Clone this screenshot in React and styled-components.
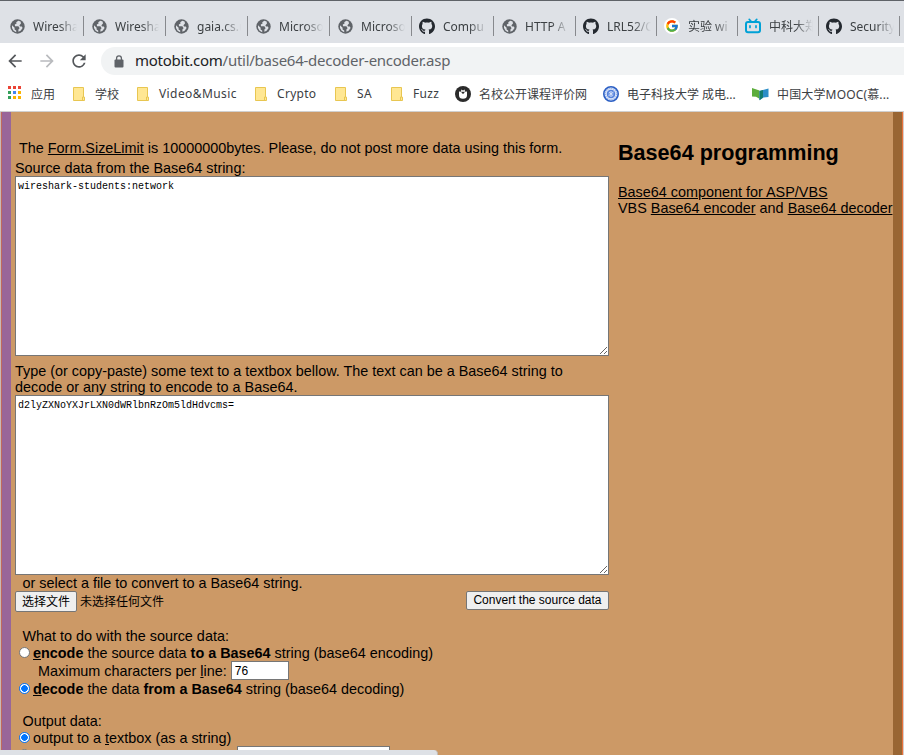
import React from "react";
import styled, { createGlobalStyle } from "styled-components";
import { MdArrowBack, MdArrowForward, MdRefresh } from "react-icons/md";
import { FaGithub } from "react-icons/fa";
import { FcGoogle } from "react-icons/fc";

const Global = createGlobalStyle`
  * { box-sizing: border-box; }
  html, body, #root { height: 100%; }
  body { margin: 0; overflow: hidden; background: #cc9966; }
`;

const Browser = styled.div`
  position: relative;
  display: flex;
  flex-direction: column;
  width: 904px;
  height: 755px;
  overflow: hidden;
  font-family: "Noto Sans", "Noto Sans CJK SC", sans-serif;
  font-size: 12px;
  color: #3c4043;
`;

const TabStrip = styled.div`
  display: flex;
  flex: none;
  height: 43px;
  padding: 15px 0 0 2px;
  border-top: 1px solid #5f6368;
  background: #dee1e6;
`;

const Tab = styled.div`
  display: flex;
  align-items: center;
  flex: none;
  width: ${(p) => p.$w}px;
  height: 20px;
  padding-left: 7px;
  gap: 8px;
  border-right: 1px solid #87898d;
`;

const Favicon = styled.span`
  display: flex;
  flex: none;
  align-items: center;
  justify-content: center;
  width: 16px;
  height: 16px;
  border-radius: 8px;
  background: ${(p) => p.$bg || "transparent"};
  color: ${(p) => p.$color || "#5f6368"};
`;

const TabTitle = styled.span`
  width: 44px;
  overflow: hidden;
  white-space: nowrap;
  line-height: 18px;
  padding-top: 2px;
  mask-image: linear-gradient(to right, #000 26px, transparent 44px);
`;

const Toolbar = styled.div`
  display: flex;
  flex: none;
  align-items: center;
  height: 36px;
  padding-left: 5px;
  background: #fff;
`;

const NavButton = styled.span`
  display: flex;
  width: 32px;
  height: 20px;
  align-items: center;
  color: ${(p) => (p.$off ? "#b9bbbe" : "#54575b")};
`;

const AddressBar = styled.div`
  display: flex;
  flex: 1;
  align-items: center;
  height: 28px;
  padding-left: 13px;
  border-radius: 14px 0 0 14px;
  background: #f1f3f4;
  font-size: 15px;
  color: #5f6368;
`;

const Url = styled.span`
  margin: -2px 0 0 11px;
  white-space: nowrap;
  letter-spacing: -0.26px;
  b { font-weight: 400; color: #202124; }
`;

const Bookmarks = styled.div`
  flex: none;
  height: 33px;
  border-bottom: 1px solid #d0d0d0;
  background: #fff;
  display: grid;
  grid-template-columns: 65px 64px 118px 80px 56px 65px 148px 149px 1fr;
  align-items: center;
  padding: 0 0 3px 7px;
`;

const Bookmark = styled.span`
  display: flex;
  align-items: center;
  gap: ${(p) => p.$gap || 8}px;
  white-space: nowrap;
  letter-spacing: ${(p) => p.$ls || 0}px;
  svg { flex: none; }
`;

const Page = styled.main`
  flex: 1;
  display: flex;
  min-height: 0;
  border-left: 1px solid #c9b8b4;
  border-right: 1px solid #d8cdc8;
  background: #cc9966;
  font-family: "Liberation Sans", Arial, sans-serif;
  font-size: 14.4px;
  line-height: 16px;
  color: #000;
`;

const LeftRail = styled.div`
  flex: none;
  width: 10px;
  border-left: 1px solid #c06a5c;
  background: #996699;
`;

const RightRail = styled.div`
  flex: none;
  width: 10px;
  background: #996633;
  border-right: 1px solid #e8703a;
`;

const FormColumn = styled.form`
  flex: none;
  width: 598px;
  margin-left: 4px;
  padding-top: 28px;
`;

const SideColumn = styled.aside`
  flex: 1;
  margin-left: 5px;
  padding-top: 27px;
  white-space: nowrap;
`;

const Heading = styled.h2`
  margin: 0 0 18px;
  font-size: 21.6px;
  line-height: 27px;
`;

const Line = styled.div`
  display: flex;
  align-items: center;
  height: ${(p) => p.$h || 16}px;
  margin-top: ${(p) => p.$mt || 0}px;
  padding-left: ${(p) => p.$pl || 0}px;
  white-space: pre;
  letter-spacing: ${(p) => p.$ls || 0}px;
`;

const Area = styled.textarea`
  display: block;
  width: 594px;
  height: 180px;
  margin: 0;
  padding: 3px 2px 2px;
  border: 1px solid #767676;
  outline: none;
  background: #fff;
  color: #000;
  font: 10px/13px "Liberation Mono", monospace;
  resize: both;
`;

const FileRow = styled.div`
  display: flex;
  align-items: flex-start;
  width: 594px;
  height: 21px;
  font: 12px/16px "Liberation Sans", "Noto Sans CJK SC", sans-serif;
`;

const Button = styled.button`
  width: ${(p) => p.$w}px;
  height: ${(p) => p.$h}px;
  padding: ${(p) => p.$pt || 0}px 0 0;
  border: 1px solid #767676;
  border-radius: 2px;
  background: #efefef;
  color: #000;
  font: inherit;
  line-height: 15px;
  white-space: nowrap;
`;

const FileName = styled.span`
  flex: 1;
  padding: 3px 0 0 3px;
`;

const Radio = styled.span`
  flex: none;
  width: 11px;
  height: 11px;
  margin: 0 3px 2px 4px;
  border: 1px solid ${(p) => (p.$on ? "#0075ff" : "#767676")};
  border-radius: 50%;
  background: ${(p) => (p.$on ? "radial-gradient(circle, #0075ff 3px, #fff 3.6px)" : "#fff")};
`;

const Field = styled.input`
  width: ${(p) => p.$w}px;
  height: 19px;
  margin-left: ${(p) => p.$ml}px;
  padding: 0 3px;
  border: 1px solid #767676;
  background: #fff;
  font: 12px "Liberation Sans", Arial, sans-serif;
`;

const StatusBubble = styled.div`
  position: absolute;
  left: 0;
  bottom: 0;
  width: 438px;
  height: 5px;
  border-top-right-radius: 4px;
  background: #dee1e6;
  border-right: 1px solid #c3beb8;
`;

const Globe = () => (
  <svg width="15" height="15" viewBox="0 0 15 15">
    <circle cx="7.5" cy="7.5" r="7.2" fill="#5f6368" />
    <path
      d="M8.3 1.7 6.2 3.2 6.6 4.6 4.8 5.6 5 7.2H8.4L9.6 9.2 8.4 10.6V12.8L10.6 11.8 12.6 9 11.8 7.6H10L9.4 6.2 11 4.6 10.6 2.6Z"
      fill="#dee1e6"
    />
    <path d="M2 6.2 4.6 8.8V10.4L6.2 11.6V13.2L3.6 11.8 2 9Z" fill="#dee1e6" />
  </svg>
);

const Lock = () => (
  <svg width="10" height="13" viewBox="0 0 10 13">
    <rect x=".5" y="4.5" width="9" height="8" rx="1" fill="#5f6368" />
    <path d="M2.6 5V3.2a2.4 2.4 0 0 1 4.8 0V5" fill="none" stroke="#5f6368" strokeWidth="1.3" />
  </svg>
);

const Folder = () => (
  <svg width="13" height="16" viewBox="0 0 13 16">
    <path d="M1.5 1.5h10v9.6h1v3.4h-11z" fill="#ffe793" stroke="#e8c651" />
    <path d="M10.5 14v-3h1" fill="none" stroke="#e8c651" />
  </svg>
);

const appColors = ["#ea4335", "#ea4335", "#ea4335", "#34a05a", "#4285f4", "#fbb400", "#34a05a", "#fbb400", "#fbb400"];
const Apps = () => (
  <svg width="15" height="15" viewBox="0 0 15 15">
    {appColors.map((c, i) => (
      <rect key={i} x={1 + (i % 3) * 5} y={Math.floor(i / 3) * 5} width="3" height="3" fill={c} shapeRendering="crispEdges" />
    ))}
  </svg>
);

const Bilibili = () => (
  <svg width="16" height="16" viewBox="0 0 16 16" fill="none" stroke="#00a1d6" strokeLinecap="round">
    <rect x="1" y="4" width="14" height="10.3" rx="2" strokeWidth="2" />
    <path d="M4.2 1.3 6 3.4M11.8 1.3 10 3.4M5 7.8v1.6M11 7.8v1.6" strokeWidth="1.7" />
  </svg>
);

const CourseReview = () => (
  <svg width="16" height="16" viewBox="0 0 16 16">
    <circle cx="8" cy="8" r="8" fill="#2b2b2b" />
    <path d="M4 5.4 6.4 5.8 6 3.6 8 4.6l2-1-.4 2.2 2.4-.4v3.8a4 3.6 0 0 1-8 0z" fill="#fff" />
    <path d="M6.2 6.4 8 8l1.8-1.6L8 5.4z" fill="#2b2b2b" />
  </svg>
);

const University = () => (
  <svg width="16" height="16" viewBox="0 0 16 16" fill="none" stroke="#2b5fc4">
    <circle cx="8" cy="8" r="7.2" strokeWidth="1.6" fill="#dce6fa" />
    <circle cx="8" cy="8" r="5.6" strokeDasharray="1 1" strokeOpacity=".5" />
    <circle cx="8" cy="8" r="3.8" fill="#6f96e4" stroke="#4d7cd8" />
    <path d="M5.5 9.8 10.5 6M6 6.2l4 3.4M8 5v6" stroke="#dce6fa" strokeWidth=".9" />
  </svg>
);

const Mooc = () => (
  <svg width="17" height="14" viewBox="0 0 17 14">
    <path d="M0 1 7.5 3.6v8.2L4 9.8 0 9.5z" fill="#5cad3c" />
    <path d="M16.5 1.5 7.5 4v9.2l4-2.7 5-.5z" fill="#2b8dc8" />
    <path d="M7.5 4 11 3v7.6l-3.5 2.6z" fill="#137b6d" />
  </svg>
);

const globe = <Favicon><Globe /></Favicon>;
const github = <Favicon $color="#24292f"><FaGithub size={17} /></Favicon>;
const tabs = [
  [82, globe, "Wiresha"], [82, globe, "Wiresha"], [82, globe, "gaia.cs.u"],
  [82, globe, "Microso"], [82, globe, "Microso"], [82, github, "Compu"],
  [82, globe, "HTTP A"], [81, github, "LRL52/C"],
  [81, <Favicon $bg="#fff"><FcGoogle size={14} /></Favicon>, "实验 wi"],
  [81, <Favicon><Bilibili /></Favicon>, "中科大郑"], [81, github, "Security"],
];

export default function App() {
  return (
    <Browser>
      <Global />
      <TabStrip>
        {tabs.map(([w, icon, title], i) => (
          <Tab key={i} $w={w}>{icon}<TabTitle>{title}</TabTitle></Tab>
        ))}
      </TabStrip>
      <Toolbar>
        <NavButton><MdArrowBack size={20} /></NavButton>
        <NavButton $off><MdArrowForward size={20} /></NavButton>
        <NavButton><MdRefresh size={20} /></NavButton>
        <AddressBar>
          <Lock />
          <Url><b>motobit.com</b>/util/base64-decoder-encoder.asp</Url>
        </AddressBar>
      </Toolbar>
      <Bookmarks>
        <Bookmark $gap={9}><Apps />应用</Bookmark>
        <Bookmark $gap={10}><Folder />学校</Bookmark>
        <Bookmark $gap={10} $ls={0.4}><Folder />Video&amp;Music</Bookmark>
        <Bookmark $gap={10} $ls={0.3}><Folder />Crypto</Bookmark>
        <Bookmark $gap={10} $ls={0.3}><Folder />SA</Bookmark>
        <Bookmark $gap={10} $ls={0.3}><Folder />Fuzz</Bookmark>
        <Bookmark><CourseReview />名校公开课程评价网</Bookmark>
        <Bookmark><University />电子科技大学 成电...</Bookmark>
        <Bookmark $ls={0.15}><Mooc />中国大学MOOC(慕...</Bookmark>
      </Bookmarks>
      <Page>
        <LeftRail />
        <FormColumn>
          <Line $pl={4}>The <u>Form.SizeLimit</u> is 10000000bytes. Please, do not post more data using this form.</Line>
          <Line $mt={4}>Source data from the Base64 string:</Line>
          <Area defaultValue="wireshark-students:network" spellCheck={false} />
          <Line $mt={7}>Type (or copy-paste) some text to a textbox bellow. The text can be a Base64 string to</Line>
          <Line>decode or any string to encode to a Base64.</Line>
          <Area defaultValue="d2lyZXNoYXJrLXN0dWRlbnRzOm5ldHdvcms=" spellCheck={false} />
          <Line $pl={7.5}>or select a file to convert to a Base64 string.</Line>
          <FileRow>
            <Button type="button" $w={62} $h={21} $pt={1}>选择文件</Button>
            <FileName>未选择任何文件</FileName>
            <Button type="button" $w={143} $h={19}>Convert the source data</Button>
          </FileRow>
          <Line $pl={7.5} $mt={16}>What to do with the source data:</Line>
          <Line $mt={1}><Radio /><b><u>e</u>ncode</b> the source data <b>to a Base64</b> string (base64 encoding)</Line>
          <Line $h={19} $pl={23}>Maximum characters per <u>l</u>ine:<Field $w={58} $ml={4} defaultValue="76" /></Line>
          <Line $mt={1}><Radio $on /><b><u>d</u>ecode</b> the data <b>from a Base64</b> string (base64 decoding)</Line>
          <Line $pl={7.5} $mt={16}>Output data:</Line>
          <Line $mt={1}><Radio $on />output to a <u>t</u>extbox (as a string)</Line>
          <Line $h={19}><Radio /><Field $w={153} $ml={204} readOnly /></Line>
        </FormColumn>
        <SideColumn>
          <Heading>Base64 programming</Heading>
          <div><u>Base64 component for ASP/VBS</u></div>
          <div>VBS <u>Base64 encoder</u> and <u>Base64 decoder</u></div>
        </SideColumn>
        <RightRail />
      </Page>
      <StatusBubble />
    </Browser>
  );
}
